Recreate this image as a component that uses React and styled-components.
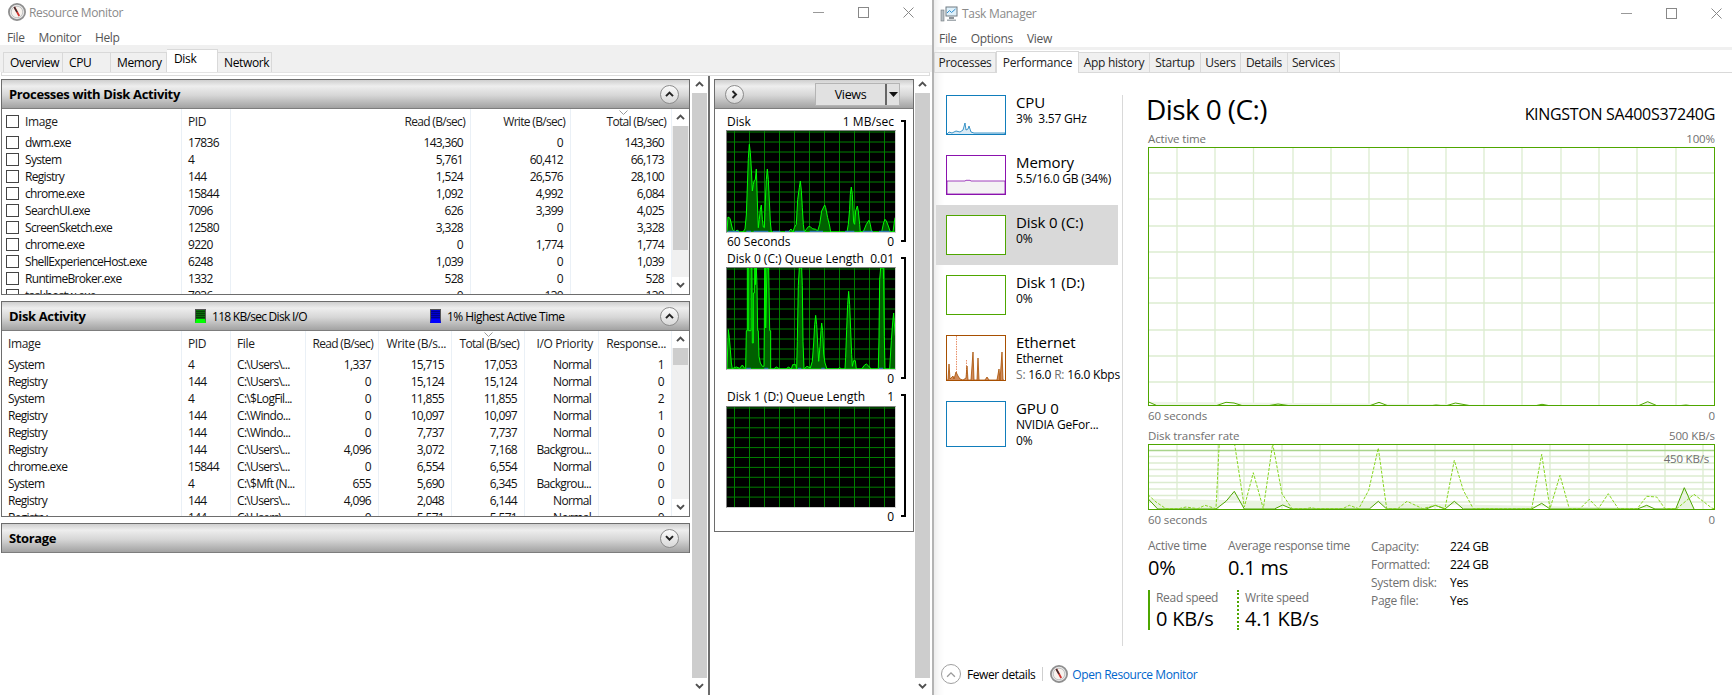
import React from "react";
import styled, { createGlobalStyle } from "styled-components";

const Global = createGlobalStyle`
  html, body { margin: 0; padding: 0; background: #fff; }
  body { font-family: "Open Sans", "Noto Sans", sans-serif; color: #000; overflow: hidden; }
  * { box-sizing: border-box; }
`;

//=========== page ============
const Page = styled.div`
  display: flex;
  width: 1732px;
  height: 695px;
  overflow: hidden;
`;

//=========== resource monitor ============
const MonitorWindow = styled.div`
  width: 932px;
  height: 695px;
  display: flex;
  flex-direction: column;
  font-size: 12px;
  letter-spacing: -0.35px;
`;
const TitleBar = styled.div`
  height: ${(p) => p.$h}px;
  display: flex;
  align-items: center;
  padding-left: ${(p) => p.$left}px;
  gap: ${(p) => p.$gap}px;
  flex-shrink: 0;
`;
const TitleText = styled.span`
  font-size: 12px;
  color: #8a8a8a;
  flex: 1;
`;
const WinControls = styled.div`
  display: flex;
  align-items: center;
  gap: ${(p) => p.$gap}px;
  padding-right: ${(p) => p.$right}px;
`;
const MenuBar = styled.div`
  height: ${(p) => p.$h}px;
  display: flex;
  align-items: center;
  gap: ${(p) => p.$gap}px;
  padding: ${(p) => p.$top}px 0 0 ${(p) => p.$left}px;
  font-size: 12px;
  color: #555;
  flex-shrink: 0;
`;
const TabBand = styled.div`
  height: 27px;
  background: #f0f0f0;
  display: flex;
  align-items: flex-end;
  padding-left: 3px;
  flex-shrink: 0;
`;
const MonitorTab = styled.div`
  width: ${(p) => p.$w}px;
  height: ${(p) => (p.$active ? 23 : 20)}px;
  padding: ${(p) => (p.$active ? "0 0 5px 7px" : "0 0 0 6px")};
  display: flex;
  align-items: center;
  background: ${(p) => (p.$active ? "#fff" : "#f0f0f0")};
  border: 1px solid #d9d9d9;
  border-bottom: 0;
  border-left-width: ${(p) => (p.$first ? 1 : 0)}px;
  font-size: 12px;
`;
const TabStrip = styled.div`
  height: 4px;
  margin: 0 2px 0 1px;
  border: 1px solid #dcdcdc;
  border-top-color: #e4e4e4;
  flex-shrink: 0;
`;
const MonitorBody = styled.div`
  flex: 1;
  display: flex;
  min-height: 0;
`;
const PanelColumn = styled.div`
  width: 691px;
  margin-left: 1px;
  padding-top: 3px;
  display: flex;
  flex-direction: column;
  gap: 6px;
`;
const Panel = styled.div`
  height: ${(p) => p.$h}px;
  border: 1px solid #6d6d6d;
  width: 689px;
  display: flex;
  flex-direction: column;
  flex-shrink: 0;
`;
const PanelHead = styled.div`
  height: 29px;
  flex-shrink: 0;
  display: flex;
  align-items: center;
  padding: 0 10px 0 7px;
  background: linear-gradient(#cfcfcf 0%, #eeeeee 22%, #d6d6d6 55%, #a2a2a2 100%);
  border-bottom: 1px solid #7d7d7d;
`;
const PanelTitle = styled.span`
  font-size: 13px;
  font-weight: 700;
  letter-spacing: -0.35px;
  width: ${(p) => p.$w || "auto"};
`;
const Legend = styled.span`
  display: flex;
  align-items: center;
  gap: 6px;
  font-size: 12px;
  letter-spacing: ${(p) => p.$ls}px;
  width: ${(p) => p.$w}px;
`;
const Swatch = styled.span`
  width: 11px;
  height: 14px;
  border: 1px solid #555;
  background: repeating-linear-gradient(0deg, ${(p) => p.$a} 0 1px, ${(p) => p.$b} 1px 2px);
  border-bottom: 4px solid ${(p) => p.$c};
`;
const RoundBtn = styled.span`
  width: 19px;
  height: 19px;
  border-radius: 50%;
  border: 1px solid #8c8c8c;
  background: linear-gradient(#fbfbfb, #d8d8d8);
  margin-left: ${(p) => (p.$start ? 0 : "auto")};
  display: flex;
  align-items: center;
  justify-content: center;
  flex-shrink: 0;
`;
const TableWrap = styled.div`
  flex: 1;
  min-height: 0;
  display: flex;
`;
const TableArea = styled.div`
  flex: 1;
  overflow: hidden;
  min-width: 0;
`;
const Row = styled.div`
  display: grid;
  grid-template-columns: ${(p) => p.$cols};
  height: ${(p) => p.$h}px;
`;
const Cell = styled.div`
  position: relative;
  display: flex;
  align-items: center;
  justify-content: ${(p) => (p.$right ? "flex-end" : "flex-start")};
  padding: ${(p) => (p.$right ? `0 ${p.$head ? 5 : 7}px 0 0` : `0 0 0 ${p.$pad ?? 6}px`)};
  gap: 6px;
  border-right: 1px solid #eaf0f6;
  white-space: nowrap;
  overflow: hidden;
  letter-spacing: ${(p) => (p.$head && !p.$tight ? "-0.35px" : "-0.68px")};
  color: ${(p) => (p.$head ? "#1c1c1c" : "#111")};
`;
const Check = styled.span`
  width: 13px;
  height: 13px;
  border: 1px solid #444;
  background: #fff;
  flex-shrink: 0;
`;
const SortMark = styled.svg`
  position: absolute;
  top: 1px;
  left: ${(p) => p.$left}px;
`;
const ScrollBar = styled.div`
  width: ${(p) => p.$w}px;
  flex-shrink: 0;
  background: ${(p) => p.$bg};
  display: flex;
  flex-direction: column;
`;
const ScrollBtn = styled.div`
  height: ${(p) => p.$h}px;
  background: #fff;
  flex-shrink: 0;
  display: flex;
  align-items: center;
  justify-content: center;
`;
const ScrollTrack = styled.div`
  flex: 1;
  min-height: 0;
  padding: 0 1px;
`;
const ScrollThumb = styled.div`
  height: ${(p) => p.$h}px;
  background: #cdcdcd;
`;
const OuterTrack = styled.div`
  flex: 1;
  background: #cdcdcd;
`;
const GraphColumn = styled.div`
  width: 207px;
  margin-left: 1px;
  border-left: 2px solid #6d6d6d;
  padding: 3px 0 0 4px;
`;
const GraphPanel = styled.div`
  width: 200px;
  height: 453px;
  border: 1px solid #6d6d6d;
  display: flex;
  flex-direction: column;
`;
const GraphHead = styled(PanelHead)`
  padding: 0 0 0 10px;
  justify-content: space-between;
`;
const ViewsBtn = styled.div`
  width: 85px;
  height: 23px;
  margin-right: 13px;
  background: #e1e1e1;
  border: 1px solid #b4b4b4;
  display: grid;
  grid-template-columns: 1fr 14px;
  align-items: center;
  font-size: 12.5px;
  text-align: center;
`;
const ViewsArrow = styled.span`
  height: 100%;
  border-left: 2px solid #666;
  display: flex;
  align-items: center;
  justify-content: center;
`;
const GraphBody = styled.div`
  padding: 4px 0 0 11px;
`;
const GraphBlock = styled.div`
  display: flex;
  gap: 5px;
`;
const GraphInner = styled.div`
  width: 170px;
`;
const GraphLabels = styled.div`
  display: flex;
  justify-content: space-between;
  height: ${(p) => p.$h}px;
  align-items: center;
  padding: 0 2px 0 1px;
  font-size: 12px;
  letter-spacing: 0;
  white-space: nowrap;
`;
const Bracket = styled.div`
  width: 5px;
  margin: 7px 0 8px;
  border: 2px solid #000;
  border-left: 0;
`;
const Scope = styled.svg`
  display: block;
  width: 170px;
  height: ${(p) => p.$h}px;
  border: 1px solid;
  border-color: #808080 #d0d0d0 #d0d0d0 #808080;
  background: #000;
`;

//=========== task manager ============
const ManagerWindow = styled.div`
  width: 800px;
  height: 695px;
  border-left: 2px solid #b4b4b4;
  box-shadow: inset 12px 0 10px -10px rgba(0, 0, 0, 0.1);
  display: flex;
  flex-direction: column;
  font-size: 12px;
  letter-spacing: -0.3px;
`;
const ManagerBand = styled.div`
  height: 3px;
  background: #f0f0f0;
  flex-shrink: 0;
`;
const ManagerTabs = styled.div`
  height: 23px;
  display: flex;
  align-items: flex-end;
  border-bottom: 1px solid #d9d9d9;
  flex-shrink: 0;
`;
const ManagerTab = styled.div`
  width: ${(p) => p.$w}px;
  height: ${(p) => (p.$active ? 22 : 20)}px;
  margin-bottom: ${(p) => (p.$active ? -1 : 0)}px;
  background: ${(p) => (p.$active ? "#fff" : "#f0f0f0")};
  border: 1px solid #d9d9d9;
  border-bottom: 0;
  border-left-width: ${(p) => (p.$first || p.$active ? 1 : 0)}px;
  display: flex;
  align-items: ${(p) => (p.$active ? "flex-start" : "center")};
  justify-content: center;
  padding-top: ${(p) => (p.$active ? 2 : 0)}px;
  font-size: 12px;
  letter-spacing: -0.3px;
  color: #222;
`;
const ManagerBody = styled.div`
  flex: 1;
  min-height: 0;
  display: flex;
`;
const SideList = styled.div`
  width: 188px;
  padding: 12px 0 0 2px;
  flex-shrink: 0;
`;
const SideItem = styled.div`
  width: 182px;
  height: ${(p) => p.$h}px;
  display: flex;
  gap: 10px;
  padding: 10px 0 0 10px;
  background: ${(p) => (p.$active ? "#d9d9d9" : "transparent")};
`;
const Thumb = styled.svg`
  display: block;
  width: 60px;
  height: ${(p) => p.$h}px;
  border: 1px solid ${(p) => p.$color};
  flex-shrink: 0;
  background: #fff;
`;
const SideText = styled.div`
  margin-top: -2px;
  white-space: nowrap;
`;
const SideTitle = styled.div`
  font-size: 15px;
  line-height: 18px;
  letter-spacing: -0.1px;
`;
const SideSub = styled.div`
  font-size: 12px;
  line-height: 15.5px;
  letter-spacing: -0.2px;
`;
const Muted = styled.span`
  color: #707070;
`;
const Divider = styled.div`
  width: 1px;
  height: 551px;
  margin-top: 22px;
  background: #d9d9d9;
  flex-shrink: 0;
`;
const Main = styled.div`
  width: 567px;
  margin-left: 25px;
  padding-top: 18px;
`;
const HeadRow = styled.div`
  display: flex;
  justify-content: space-between;
  align-items: baseline;
  height: 36px;
  line-height: 36px;
`;
const BigTitle = styled.span`
  font-size: 28px;
  letter-spacing: -0.6px;
  margin-left: -2px;
`;
const ModelName = styled.span`
  font-size: 16px;
  letter-spacing: -0.3px;
`;
const AxisRow = styled.div`
  display: flex;
  justify-content: space-between;
  height: 14px;
  line-height: 14px;
  margin-top: ${(p) => p.$mt}px;
  color: #707070;
  font-size: 11.5px;
  letter-spacing: -0.1px;
`;
const PerfChart = styled.svg`
  display: block;
  width: 567px;
  height: ${(p) => p.$h}px;
  margin-top: ${(p) => p.$mt}px;
  border: 1px solid #4ea600;
  background: #fff;
`;
const ChartWrap = styled.div`
  position: relative;
`;
const ChartNote = styled.span`
  position: absolute;
  right: 6px;
  top: 7px;
  font-size: 11.5px;
  color: #707070;
  letter-spacing: -0.2px;
`;
const StatsGrid = styled.div`
  display: flex;
  margin-top: 11px;
`;
const StatsLeft = styled.div`
  width: 223px;
`;
const StatsRow = styled.div`
  display: flex;
  margin-bottom: ${(p) => p.$mb || 0}px;
`;
const Stat = styled.div`
  width: ${(p) => p.$w}px;
  height: ${(p) => (p.$line ? "40px" : "auto")};
  flex-shrink: 0;
  padding-left: ${(p) => (p.$line ? 6 : 0)}px;
  border-left: ${(p) => (p.$line ? `2px ${p.$line} #4ea600` : "none")};
`;
const StatLabel = styled.div`
  font-size: 12px;
  line-height: 16px;
  color: #707070;
  letter-spacing: -0.3px;
`;
const StatValue = styled.div`
  font-size: 20px;
  line-height: 27px;
  letter-spacing: -0.2px;
  margin-top: ${(p) => p.$mt || 0}px;
`;
const DetailGrid = styled.div`
  display: grid;
  grid-template-columns: 79px auto;
  grid-auto-rows: 18px;
  align-items: center;
  font-size: 12px;
  line-height: 18px;
  letter-spacing: -0.3px;
  align-self: flex-start;
`;
const DetailName = styled.span`
  color: #707070;
`;
const Footer = styled.div`
  height: 42px;
  flex-shrink: 0;
  display: flex;
  align-items: center;
  padding: 0 0 0 7px;
  font-size: 12px;
  letter-spacing: -0.42px;
`;
const FooterBtn = styled(RoundBtn)`
  width: 20px;
  height: 20px;
  margin: 0 6px 0 0;
  background: #fff;
  border-color: #a0a0a0;
`;
const FooterSep = styled.span`
  width: 1px;
  height: 14px;
  background: #cfcfcf;
  margin: 0 7px;
`;
const FooterLink = styled.a`
  color: #0066cc;
  margin-left: 4px;
`;

//=========== drawings ============
const Chevron = ({ up = true, w = 9, color = "#222", sw = 2 }) => (
  <svg width={w} height={w * 0.7} viewBox="0 0 9 6" fill="none">
    <path d={up ? "M1 5 L4.5 1.5 L8 5" : "M1 1 L4.5 4.5 L8 1"} stroke={color} strokeWidth={sw} />
  </svg>
);

const WindowButtons = ({ gap, right }) => (
  <WinControls $gap={gap} $right={right}>
    <svg width="11" height="11" viewBox="0 0 11 11"><path d="M0 5.5H11" stroke="#999" /></svg>
    <svg width="11" height="11" viewBox="0 0 11 11"><rect x=".5" y=".5" width="10" height="10" fill="none" stroke="#888" /></svg>
    <svg width="11" height="11" viewBox="0 0 11 11"><path d="M.5 .5L10.5 10.5M10.5 .5L.5 10.5" stroke="#888" /></svg>
  </WinControls>
);

const GaugeIcon = ({ size = 18 }) => (
  <svg width={size} height={size} viewBox="0 0 20 20">
    <circle cx="10" cy="10" r="9" fill="#e9e9e9" stroke="#8f8f8f" strokeWidth="2" />
    <circle cx="10" cy="10" r="6.4" fill="#f7f3ee" stroke="#bdbdbd" />
    <path d="M7 4.5L12.5 14.5" stroke="#d0312d" strokeWidth="2" />
    <path d="M7 4.5L10 10" stroke="#333" strokeWidth="1.6" />
  </svg>
);

const ManagerIcon = () => (
  <svg width="18" height="16" viewBox="0 0 18 16">
    <rect x="6" y="1" width="11" height="9" fill="#dff0fa" stroke="#6f7a82" />
    <path d="M7 7L9.5 4.5L11.5 6.5L15.5 3" fill="none" stroke="#2d8fd0" />
    <rect x="9" y="11" width="5" height="2" fill="#8b9399" />
    <rect x="1" y="4" width="3" height="11" fill="#b7bec3" stroke="#70787e" strokeWidth=".6" />
    <rect x="7" y="13.5" width="9" height="1.5" fill="#a4abb0" />
  </svg>
);

const xLines = [7.5, 22.5, 37.5, 52.5, 67.5, 82.5, 97.5, 112.5, 127.5, 142.5, 157.5];
const yLines = [1, 11, 21, 31, 41, 51, 61, 71, 81, 91];

const diskPts =
  "12,313 15,268 21,272 27,298 30,308 36,313 42,307 50,313 60,313 66,304 70,262 73,178 76,92 79,50 82,75 85,124 88,190 91,170 94,158 97,156 100,124 103,220 106,300 109,275 112,245 115,232 118,275 121,298 124,300 127,220 130,156 133,124 136,156 139,220 142,283 145,313 196,313 204,304 210,313 214,300 220,290 224,216 229,180 232,160 235,188 238,240 241,290 244,313 250,305 256,297 262,297 268,303 278,305 284,310 290,290 296,250 302,238 305,232 308,240 314,270 320,295 323,313 372,313 376,290 380,245 382,200 385,178 388,200 392,285 395,290 398,250 403,235 406,250 410,290 412,313 422,310 430,290 438,278 442,290 446,313 476,313 482,285 486,275 490,280 496,295 502,313 510,313 516,270 520,270 520,313";
const queuePts =
  "12,313 16,195 19,218 22,255 25,295 28,313 32,310 40,307 50,311 58,301 64,310 68,313 70,198 73,198 73,10 76,10 76,198 84,198 84,10 87,10 88,235 91,235 91,85 94,85 94,10 97,10 97,60 100,10 102,60 104,198 106,198 108,275 112,295 118,305 123,305 124,190 125,10 128,10 128,190 132,10 137,10 140,198 143,198 143,313 152,313 160,307 170,313 190,313 196,307 205,313 209,300 218,300 221,313 223,230 226,62 229,10 236,10 238,62 240,230 243,313 252,305 262,310 268,290 272,235 275,180 278,152 281,180 284,235 287,290 291,245 294,198 296,175 299,198 302,268 306,295 312,313 345,313 350,308 355,313 366,313 368,278 371,195 374,120 377,80 380,120 383,195 386,270 388,305 392,288 397,288 400,313 416,313 424,302 430,298 436,303 444,313 466,313 468,222 470,45 473,10 481,10 482,45 484,215 486,313 500,313 505,228 509,175 512,145 514,175 517,213 520,213 520,313";
const diskBlue = [[14, 48], [70, 84], [92, 136], [150, 172], [186, 200], [215, 245], [260, 300], [366, 394], [420, 450], [468, 500]];
const queueBlue = [[70, 84], [124, 136], [225, 235], [295, 305], [468, 480]];

const Oscilloscope = ({ h, pts, blue }) => (
  <Scope $h={h} viewBox="0 0 168 101" preserveAspectRatio="none">
    {xLines.map((x) => <path key={x} d={`M${x} 0V101`} stroke="#008000" />)}
    {yLines.map((y) => <path key={y} d={`M0 ${y}H168`} stroke="#008000" />)}
    {pts && (
      <g transform="translate(-4 -3.33) scale(.3333)">
        <polygon points={pts} fill="#006000" stroke="#00ff00" strokeWidth="3" />
        {blue.map(([a, b]) => <path key={a} d={`M${a} 311H${b}`} stroke="#3f74e0" strokeWidth="3" />)}
      </g>
    )}
  </Scope>
);

const activeVLines = [1177, 1215, 1253.5, 1293, 1331, 1369, 1408, 1446, 1484, 1522, 1561, 1599, 1637, 1676];
const activeHLines = [174, 200, 227, 253, 279, 304, 331, 357, 383];
const activePts =
  "1148,402.7 1157.7,407 1215.4,407 1226,403.3 1234,404 1243.5,407 1266.5,407 1278,405 1291.5,407 1369,407 1379,403.3 1388.5,407 1429,407 1436,406 1445.4,407 1455.4,404 1472,407 1534,407 1542,405.3 1551,407 1637.7,407 1647.7,402.7 1657.7,407 1676,407 1686,406 1693.5,407";

const rateVLines = [1177, 1218, 1244, 1282, 1320, 1359, 1397, 1435, 1474, 1512, 1550, 1589, 1627, 1665, 1703];
const rateHLines = [458.5, 465, 471.5, 478, 484.5, 491, 497.5, 504];
const readPts =
  "1148,500.7 1157.7,511 1216,511 1226,503.3 1234.3,493.3 1244.3,511 1274.3,511 1282.7,507 1292,511 1369.3,511 1378.3,503.3 1386.7,511 1426,511 1435.3,507.3 1445,511 1454.3,503.3 1463.3,511 1531.7,511 1541.7,505.3 1550,511 1637.3,511 1646.7,507.3 1655,511 1675.7,511 1684.3,489.7 1694,511";
const writePts =
  "1148,496.7 1156,504 1166,510.7 1178.7,510.7 1186,509 1197.7,510.7 1205,507.3 1216,510.7 1219.3,444 1234.3,444 1244.3,509 1253.3,474.7 1263.3,510.7 1272.7,445.7 1282,495.7 1292,510.7 1306,510.7 1311,509.7 1316,510.7 1342.7,510.7 1349.3,507.3 1358.7,510.7 1368.7,492.3 1378.3,450 1386.7,510.7 1397.7,510.7 1407,503.3 1422.7,510.7 1435,507.3 1445,510.7 1454.3,462.3 1463.3,492.3 1473.3,510.7 1531.7,510.7 1541.7,456.3 1550,510.7 1560,477.3 1569.3,510.7 1580,510.7 1589.3,501.3 1598.3,510.7 1608.3,495.7 1618.3,510.7 1637.3,510.7 1646.7,498.3 1656.7,499 1665,510.7 1676.7,510.7 1694,496.3 1711.7,510 1715,511";

const GRID = "#dcecd0";

const ActiveChart = () => (
  <PerfChart $h={259} $mt={1} viewBox="1149 149 565 257" preserveAspectRatio="none">
    {activeVLines.map((x) => <path key={x} d={`M${x} 148V407`} stroke={GRID} strokeWidth="1.3" />)}
    {activeHLines.map((y) => <path key={y} d={`M1148 ${y}H1715`} stroke={GRID} strokeWidth="1.3" />)}
    <polyline points={activePts} fill="#eef5e8" stroke="#4ea600" strokeWidth="1" />
  </PerfChart>
);

const RateChart = () => (
  <PerfChart $h={66} $mt={1} viewBox="1149 447 565 64" preserveAspectRatio="none">
    {rateVLines.map((x) => <path key={x} d={`M${x} 446V511`} stroke={GRID} strokeWidth="1.3" />)}
    {rateHLines.map((y) => <path key={y} d={`M1148 ${y}H1715`} stroke={GRID} strokeWidth="1.3" />)}
    <path d="M1148 452.5H1715" stroke="#a9d48c" strokeWidth="1.3" />
    <polyline points={readPts} fill="#e9f3e0" stroke="#4ea600" strokeWidth="1" />
    <polyline points={writePts} fill="none" stroke="#86d61e" strokeWidth="1" strokeDasharray="3 1.5" />
  </PerfChart>
);

//=========== data ============
const procCols = "180px 49px 240px 100px 101px";
const procRows = [
  ["dwm.exe", "17836", "143,360", "0", "143,360"],
  ["System", "4", "5,761", "60,412", "66,173"],
  ["Registry", "144", "1,524", "26,576", "28,100"],
  ["chrome.exe", "15844", "1,092", "4,992", "6,084"],
  ["SearchUI.exe", "7096", "626", "3,399", "4,025"],
  ["ScreenSketch.exe", "12580", "3,328", "0", "3,328"],
  ["chrome.exe", "9220", "0", "1,774", "1,774"],
  ["ShellExperienceHost.exe", "6248", "1,039", "0", "1,039"],
  ["RuntimeBroker.exe", "1332", "528", "0", "528"],
  ["taskhostw.exe", "7036", "0", "130", "130"],
];
const ioCols = "180px 49px 75px 73px 73px 73px 74px 73px";
const ioRows = [
  ["System", "4", "C:\\Users\\...", "1,337", "15,715", "17,053", "Normal", "1"],
  ["Registry", "144", "C:\\Users\\...", "0", "15,124", "15,124", "Normal", "0"],
  ["System", "4", "C:\\$LogFil...", "0", "11,855", "11,855", "Normal", "2"],
  ["Registry", "144", "C:\\Windo...", "0", "10,097", "10,097", "Normal", "1"],
  ["Registry", "144", "C:\\Windo...", "0", "7,737", "7,737", "Normal", "0"],
  ["Registry", "144", "C:\\Users\\...", "4,096", "3,072", "7,168", "Backgrou...", "0"],
  ["chrome.exe", "15844", "C:\\Users\\...", "0", "6,554", "6,554", "Normal", "0"],
  ["System", "4", "C:\\$Mft (N...", "655", "5,690", "6,345", "Backgrou...", "0"],
  ["Registry", "144", "C:\\Users\\...", "4,096", "2,048", "6,144", "Normal", "0"],
  ["Registry", "144", "C:\\Users\\...", "0", "5,571", "5,571", "Normal", "0"],
];
const monitorTabs = [["Overview", 60], ["CPU", 48], ["Memory", 56], ["Disk", 51], ["Network", 54]];
const managerTabs = [["Processes", 62], ["Performance", 83], ["App history", 71], ["Startup", 51], ["Users", 40], ["Details", 47], ["Services", 52]];

const SortCaret = ({ left }) => (
  <SortMark $left={left} width="9" height="5" viewBox="0 0 9 5">
    <path d="M.5 .5L4.5 4.5L8.5 .5" fill="none" stroke="#9a9a9a" />
  </SortMark>
);

const TableScroll = ({ thumb }) => (
  <ScrollBar $w={17} $bg="#f0f0f0">
    <ScrollBtn $h={17}><Chevron w={9} color="#505050" /></ScrollBtn>
    <ScrollTrack><ScrollThumb $h={thumb} /></ScrollTrack>
    <ScrollBtn $h={17}><Chevron w={9} up={false} color="#505050" /></ScrollBtn>
  </ScrollBar>
);

const OuterScroll = () => (
  <ScrollBar $w={15} $bg="#fff">
    <ScrollBtn $h={17}><Chevron w={9} color="#505050" /></ScrollBtn>
    <OuterTrack />
    <ScrollBtn $h={17}><Chevron w={9} up={false} color="#505050" /></ScrollBtn>
  </ScrollBar>
);

const GraphSection = ({ top, topRight, bottom, pts, blue, h, labelH = 17 }) => (
  <GraphBlock>
    <GraphInner>
      <GraphLabels $h={labelH}><span>{top}</span><span>{topRight}</span></GraphLabels>
      <Oscilloscope h={h} pts={pts} blue={blue} />
      <GraphLabels $h={17}><span>{bottom}</span><span>0</span></GraphLabels>
    </GraphInner>
    <Bracket />
  </GraphBlock>
);

const App = () => (
  <Page>
    <Global />
    <MonitorWindow>
      <TitleBar $h={24} $left={8} $gap={3}>
        <GaugeIcon />
        <TitleText>Resource Monitor</TitleText>
        <WindowButtons gap={34} right={18} />
      </TitleBar>
      <MenuBar $h={21} $top={5} $left={7} $gap={14}>
        <span>File</span><span>Monitor</span><span>Help</span>
      </MenuBar>
      <TabBand>
        {monitorTabs.map(([name, w], i) => (
          <MonitorTab key={name} $w={w} $first={i === 0} $active={name === "Disk"}>{name}</MonitorTab>
        ))}
      </TabBand>
      <TabStrip />
      <MonitorBody>
        <PanelColumn>
          <Panel $h={216}>
            <PanelHead>
              <PanelTitle>Processes with Disk Activity</PanelTitle>
              <RoundBtn><Chevron /></RoundBtn>
            </PanelHead>
            <TableWrap>
              <TableArea>
                <Row $cols={procCols} $h={25}>
                  <Cell $head $pad={4}><Check />Image</Cell>
                  <Cell $head>PID</Cell>
                  <Cell $head $right $tight>Read (B/sec)</Cell>
                  <Cell $head $right $tight>Write (B/sec)</Cell>
                  <Cell $head $right $tight><SortCaret left={48} />Total (B/sec)</Cell>
                </Row>
                {procRows.map((r) => (
                  <Row key={r[0] + r[1]} $cols={procCols} $h={17}>
                    <Cell $pad={4}><Check />{r[0]}</Cell>
                    <Cell>{r[1]}</Cell>
                    <Cell $right>{r[2]}</Cell>
                    <Cell $right>{r[3]}</Cell>
                    <Cell $right>{r[4]}</Cell>
                  </Row>
                ))}
              </TableArea>
              <TableScroll thumb={124} />
            </TableWrap>
          </Panel>
          <Panel $h={216}>
            <PanelHead>
              <PanelTitle $w="186px">Disk Activity</PanelTitle>
              <Legend $w={235} $ls={-0.72}><Swatch $a="#0a6b0a" $b="#064006" $c="#00ff00" />118 KB/sec Disk I/O</Legend>
              <Legend $w={150} $ls={-0.55}><Swatch $a="#0000d0" $b="#000090" $c="#0000ff" />1% Highest Active Time</Legend>
              <RoundBtn><Chevron /></RoundBtn>
            </PanelHead>
            <TableWrap>
              <TableArea>
                <Row $cols={ioCols} $h={25}>
                  <Cell $head>Image</Cell>
                  <Cell $head>PID</Cell>
                  <Cell $head>File</Cell>
                  <Cell $head $right $tight>Read (B/sec)</Cell>
                  <Cell $head $right>Write (B/s...</Cell>
                  <Cell $head $right $tight><SortCaret left={32} />Total (B/sec)</Cell>
                  <Cell $head $right>I/O Priority</Cell>
                  <Cell $head $right>Response...</Cell>
                </Row>
                {ioRows.map((r, i) => (
                  <Row key={i} $cols={ioCols} $h={17}>
                    <Cell>{r[0]}</Cell>
                    <Cell>{r[1]}</Cell>
                    <Cell>{r[2]}</Cell>
                    <Cell $right>{r[3]}</Cell>
                    <Cell $right>{r[4]}</Cell>
                    <Cell $right>{r[5]}</Cell>
                    <Cell $right>{r[6]}</Cell>
                    <Cell $right>{r[7]}</Cell>
                  </Row>
                ))}
              </TableArea>
              <TableScroll thumb={17} />
            </TableWrap>
          </Panel>
          <Panel $h={30}>
            <PanelHead>
              <PanelTitle>Storage</PanelTitle>
              <RoundBtn><Chevron up={false} /></RoundBtn>
            </PanelHead>
          </Panel>
        </PanelColumn>
        <OuterScroll />
        <GraphColumn>
          <GraphPanel>
            <GraphHead>
              <RoundBtn $start><svg width="7" height="9" viewBox="0 0 6 9" fill="none"><path d="M1 1L4.5 4.5L1 8" stroke="#222" strokeWidth="2" /></svg></RoundBtn>
              <ViewsBtn>
                <span>Views</span>
                <ViewsArrow>
                  <svg width="9" height="5" viewBox="0 0 9 5"><path d="M0 0H9L4.5 5Z" fill="#111" /></svg>
                </ViewsArrow>
              </ViewsBtn>
            </GraphHead>
            <GraphBody>
              <GraphSection top="Disk" topRight="1 MB/sec" bottom="60 Seconds" pts={diskPts} blue={diskBlue} h={103} />
              <GraphSection top="Disk 0 (C:) Queue Length" topRight="0.01" bottom="" pts={queuePts} blue={queueBlue} h={103} />
              <GraphSection top="Disk 1 (D:) Queue Length" topRight="1" bottom="" h={102} labelH={19} />
            </GraphBody>
          </GraphPanel>
        </GraphColumn>
        <OuterScroll />
      </MonitorBody>
    </MonitorWindow>

    <ManagerWindow>
      <TitleBar $h={27} $left={6} $gap={4}>
        <ManagerIcon />
        <TitleText>Task Manager</TitleText>
        <WindowButtons gap={34} right={10} />
      </TitleBar>
      <MenuBar $h={20} $top={3} $left={5} $gap={14}>
        <span>File</span><span>Options</span><span>View</span>
      </MenuBar>
      <ManagerBand />
      <ManagerTabs>
        {managerTabs.map(([name, w], i) => (
          <ManagerTab key={name} $w={w} $first={i === 0} $active={name === "Performance"}>{name}</ManagerTab>
        ))}
      </ManagerTabs>
      <ManagerBody>
        <SideList>
          <SideItem $h={60}>
            <Thumb $h={40} $color="#117dbb" viewBox="0 0 58 38">
              <polyline points="0,38 2,36 5,37 9,35 13,36 16,34 18,27 19,34 21,33 22,30 24,36 27,37 58,37 58,38" fill="#d9eaf5" stroke="#117dbb" strokeWidth=".8" />
            </Thumb>
            <SideText><SideTitle>CPU</SideTitle><SideSub>3%&nbsp; 3.57 GHz</SideSub></SideText>
          </SideItem>
          <SideItem $h={60}>
            <Thumb $h={40} $color="#8b12ae" viewBox="0 0 58 38">
              <polygon points="0,25 18,25 19,24.3 23,24.3 24,25 58,25 58,38 0,38" fill="#f4f2f4" stroke="#8b12ae" strokeWidth=".8" />
            </Thumb>
            <SideText><SideTitle>Memory</SideTitle><SideSub>5.5/16.0 GB (34%)</SideSub></SideText>
          </SideItem>
          <SideItem $h={60} $active>
            <Thumb $h={40} $color="#4ea600" viewBox="0 0 58 38" />
            <SideText><SideTitle>Disk 0 (C:)</SideTitle><SideSub>0%</SideSub></SideText>
          </SideItem>
          <SideItem $h={60}>
            <Thumb $h={40} $color="#4ea600" viewBox="0 0 58 38" />
            <SideText><SideTitle>Disk 1 (D:)</SideTitle><SideSub>0%</SideSub></SideText>
          </SideItem>
          <SideItem $h={66}>
            <Thumb $h={46} $color="#a74f01" viewBox="0 0 58 44">
              <path d="M9.5 0V44M19.5 24V44" stroke="#e8916a" strokeWidth="1" strokeDasharray="1.5 1" />
              <polyline points="0,44 1,44 2,28 3,43 6,40 7,43 9,36 11,40 13,43 16,44 19,42 20,30 21,44 24,44 26,16 27,44 30,44 31,22 32,44 38,44 40,41 42,44 50,44 52,33 53,44 54,30 55,16 56,44 57,44" fill="#d08a5a" stroke="#a74f01" strokeWidth=".8" />
            </Thumb>
            <SideText><SideTitle>Ethernet</SideTitle><SideSub>Ethernet</SideSub><SideSub><Muted>S:</Muted> 16.0 <Muted>R:</Muted> 16.0 Kbps</SideSub></SideText>
          </SideItem>
          <SideItem $h={66}>
            <Thumb $h={46} $color="#117dbb" viewBox="0 0 58 44" />
            <SideText><SideTitle>GPU 0</SideTitle><SideSub>NVIDIA GeFor...</SideSub><SideSub>0%</SideSub></SideText>
          </SideItem>
        </SideList>
        <Divider />
        <Main>
          <HeadRow><BigTitle>Disk 0 (C:)</BigTitle><ModelName>KINGSTON SA400S37240G</ModelName></HeadRow>
          <AxisRow $mt={5}><span>Active time</span><span>100%</span></AxisRow>
          <ActiveChart />
          <AxisRow $mt={3}><span>60 seconds</span><span>0</span></AxisRow>
          <AxisRow $mt={6}><span>Disk transfer rate</span><span>500 KB/s</span></AxisRow>
          <ChartWrap>
            <RateChart />
            <ChartNote>450 KB/s</ChartNote>
          </ChartWrap>
          <AxisRow $mt={3}><span>60 seconds</span><span>0</span></AxisRow>
          <StatsGrid>
            <StatsLeft>
              <StatsRow $mb={9}>
                <Stat $w={80}><StatLabel>Active time</StatLabel><StatValue>0%</StatValue></Stat>
                <Stat $w={143}><StatLabel>Average response time</StatLabel><StatValue>0.1 ms</StatValue></Stat>
              </StatsRow>
              <StatsRow>
                <Stat $w={89} $line="solid"><StatLabel>Read speed</StatLabel><StatValue $mt={-1}>0 KB/s</StatValue></Stat>
                <Stat $w={134} $line="dotted"><StatLabel>Write speed</StatLabel><StatValue $mt={-1}>4.1 KB/s</StatValue></Stat>
              </StatsRow>
            </StatsLeft>
            <DetailGrid>
              <DetailName>Capacity:</DetailName><span>224 GB</span>
              <DetailName>Formatted:</DetailName><span>224 GB</span>
              <DetailName>System disk:</DetailName><span>Yes</span>
              <DetailName>Page file:</DetailName><span>Yes</span>
            </DetailGrid>
          </StatsGrid>
        </Main>
      </ManagerBody>
      <Footer>
        <FooterBtn><Chevron w={10} color="#9a9a9a" sw={1.2} /></FooterBtn>
        <span>Fewer details</span>
        <FooterSep />
        <GaugeIcon size={18} />
        <FooterLink>Open Resource Monitor</FooterLink>
      </Footer>
    </ManagerWindow>
  </Page>
);

export default App;
